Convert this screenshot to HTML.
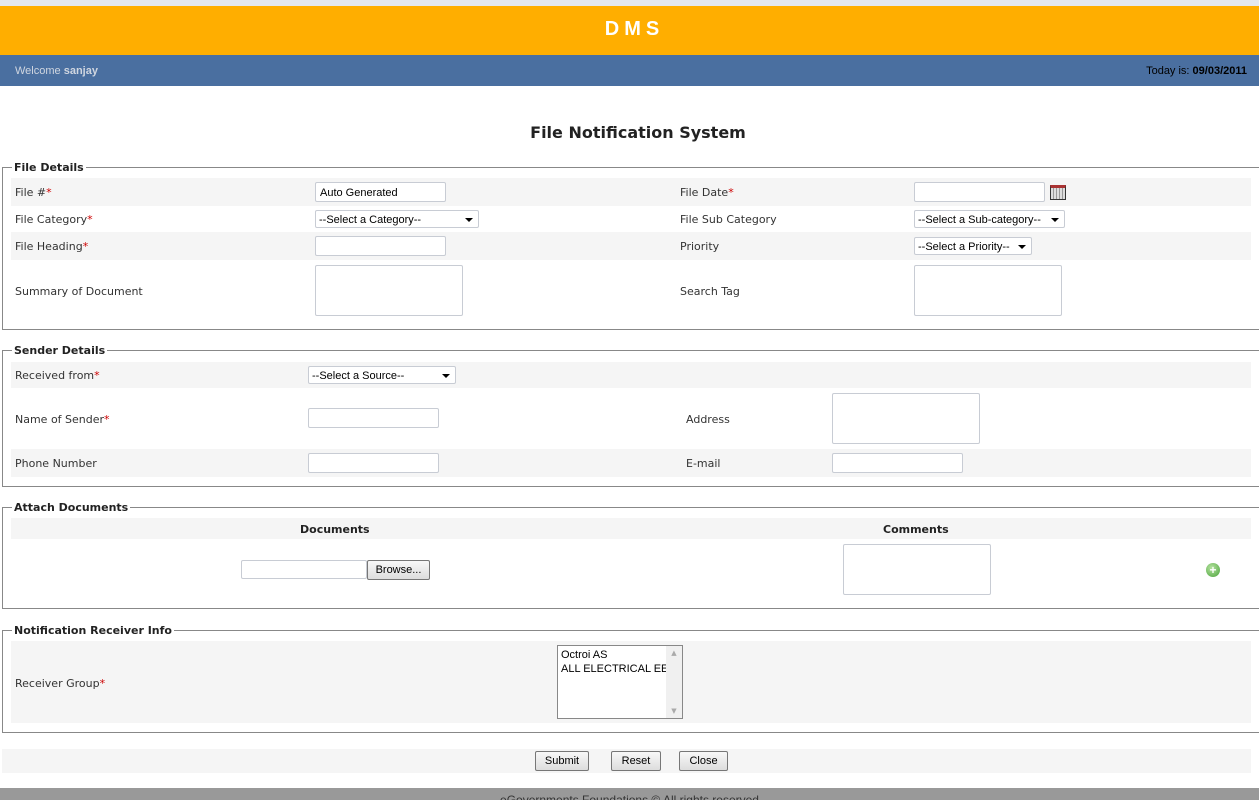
<!DOCTYPE html>
<html><head><meta charset="utf-8"><style>
*{margin:0;padding:0;box-sizing:border-box}
body{width:1259px;height:800px;position:relative;overflow:hidden;background:#fff;font-family:"DejaVu Sans",Verdana,sans-serif;font-size:11px;color:#333}
.a{position:absolute}
.g{position:absolute;background:#f5f5f5;left:11px;width:1240px}
.fs{position:absolute;left:2px;right:0;border-top:1px solid #888;border-bottom:1px solid #888;border-left:1px solid #888}
.lg{position:absolute;left:9px;top:-7px;background:#fff;padding:0 2px;font-weight:bold;font-size:11px;color:#222}
.l{position:absolute;font-size:11px;color:#333;margin-top:1px}
.r{color:#c00}
.in{position:absolute;background:#fff;border:1px solid #c8ccd4;border-radius:2px;height:20px;font-family:"Liberation Sans",Arial,sans-serif;font-size:11px;color:#000;padding:4px 4px 2px}
.ta{position:absolute;background:#fff;border:1px solid #c8ccd4;border-radius:2px}
.sel{position:absolute;background:#fff;border:1px solid #c8ccd4;border-radius:2px;height:18px;font-family:"Liberation Sans",Arial,sans-serif;font-size:11px;color:#000;padding:3px 3px 1px}
.sel:after{content:"";position:absolute;right:5px;top:7px;border-left:4px solid transparent;border-right:4px solid transparent;border-top:4px solid #000}
.btn{position:absolute;height:20px;border:1px solid #777;border-radius:2px;background:linear-gradient(#f8f8f8,#ddd);font-family:"Liberation Sans",Arial,sans-serif;font-size:11px;color:#000;text-align:center;line-height:19px}
.h{position:absolute;font-weight:bold;font-size:11px;color:#222;margin-top:1px}
</style></head><body>
<div class="a" style="left:0;top:0;width:1259px;height:6px;background:#e4e8ef"></div>
<div class="a" style="left:5px;top:6px;width:1259px;height:49px;background:#ffae00;color:#fff;font-family:'Liberation Sans',Arial,sans-serif;font-weight:bold;font-size:20px;text-align:center;line-height:46px;letter-spacing:5px">DMS</div>
<div class="a" style="left:0;top:6px;width:6px;height:49px;background:#ffae00"></div>
<div class="a" style="left:0;top:55px;width:1259px;height:31px;background:#4a6fa0"></div>
<div class="a" style="left:15px;top:65px;color:#d0d6e0;font-family:'Liberation Sans',Arial,sans-serif;font-size:11px">Welcome <b>sanjay</b></div>
<div class="a" style="right:12px;top:65px;color:#000;font-family:'Liberation Sans',Arial,sans-serif;font-size:11px">Today is: <b>09/03/2011</b></div>
<div class="a" style="left:0;width:1276px;top:123px;text-align:center;font-weight:bold;font-size:16px;color:#222">File Notification System</div>

<div class="fs" style="top:167px;height:163px"><div class="lg">File Details</div></div>
<div class="g" style="top:178px;height:28px"></div>
<div class="g" style="top:232px;height:28px"></div>
<div class="l" style="left:15px;top:185px">File #<span class="r">*</span></div>
<div class="in" style="left:315px;top:182px;width:131px">Auto Generated</div>
<div class="l" style="left:680px;top:185px">File Date<span class="r">*</span></div>
<div class="in" style="left:914px;top:182px;width:131px"></div>
<div class="a" style="left:1050px;top:185px;width:16px;height:15px;border:1px solid #333;background:repeating-linear-gradient(90deg,#ddd 0 2px,#999 2px 3px);border-top:3px solid #a33"></div>
<div class="l" style="left:15px;top:212px">File Category<span class="r">*</span></div>
<div class="sel" style="left:315px;top:210px;width:164px">--Select a Category--</div>
<div class="l" style="left:680px;top:212px">File Sub Category</div>
<div class="sel" style="left:914px;top:210px;width:151px">--Select a Sub-category--</div>
<div class="l" style="left:15px;top:239px">File Heading<span class="r">*</span></div>
<div class="in" style="left:315px;top:236px;width:131px"></div>
<div class="l" style="left:680px;top:239px">Priority</div>
<div class="sel" style="left:914px;top:237px;width:118px">--Select a Priority--</div>
<div class="l" style="left:15px;top:284px">Summary of Document</div>
<div class="ta" style="left:315px;top:265px;width:148px;height:51px"></div>
<div class="l" style="left:680px;top:284px">Search Tag</div>
<div class="ta" style="left:914px;top:265px;width:148px;height:51px"></div>

<div class="fs" style="top:350px;height:137px"><div class="lg">Sender Details</div></div>
<div class="g" style="top:362px;height:26px"></div>
<div class="g" style="top:449px;height:28px"></div>
<div class="l" style="left:15px;top:368px">Received from<span class="r">*</span></div>
<div class="sel" style="left:308px;top:366px;width:148px">--Select a Source--</div>
<div class="l" style="left:15px;top:412px">Name of Sender<span class="r">*</span></div>
<div class="in" style="left:308px;top:408px;width:131px"></div>
<div class="l" style="left:686px;top:412px">Address</div>
<div class="ta" style="left:832px;top:393px;width:148px;height:51px"></div>
<div class="l" style="left:15px;top:456px">Phone Number</div>
<div class="in" style="left:308px;top:453px;width:131px"></div>
<div class="l" style="left:686px;top:456px">E-mail</div>
<div class="in" style="left:832px;top:453px;width:131px"></div>

<div class="fs" style="top:507px;height:102px"><div class="lg">Attach Documents</div></div>
<div class="g" style="top:518px;height:21px"></div>
<div class="h" style="left:300px;top:522px">Documents</div>
<div class="h" style="left:883px;top:522px">Comments</div>
<div class="in" style="left:241px;top:560px;width:126px;height:19px"></div>
<div class="btn" style="left:367px;top:560px;width:63px">Browse...</div>
<div class="ta" style="left:843px;top:544px;width:148px;height:51px"></div>
<div class="a" style="left:1206px;top:563px;width:14px;height:14px;border-radius:50%;background:radial-gradient(circle at 40% 35%,#b5e3a0,#4aa23a);color:#fff;font:bold 12px/14px 'Liberation Sans',sans-serif;text-align:center">+</div>

<div class="fs" style="top:630px;height:103px"><div class="lg">Notification Receiver Info</div></div>
<div class="g" style="top:641px;height:82px"></div>
<div class="l" style="left:15px;top:676px">Receiver Group<span class="r">*</span></div>
<div class="a" style="left:557px;top:645px;width:126px;height:74px;background:#fff;border:1px solid #888;font-family:'Liberation Sans',Arial,sans-serif;font-size:11px;color:#000;padding:2px 3px;line-height:14px;overflow:hidden;white-space:nowrap">Octroi AS<br>ALL ELECTRICAL EE</div>
<div class="a" style="left:666px;top:646px;width:16px;height:72px;background:#f0f0f0;color:#aaa;font-size:7px;text-align:center;line-height:14px">▲<div style="position:absolute;bottom:0;width:16px">▼</div></div>

<div class="a" style="left:2px;top:749px;width:1249px;height:24px;background:#f5f5f5"></div>
<div class="btn" style="left:535px;top:751px;width:54px">Submit</div>
<div class="btn" style="left:611px;top:751px;width:50px">Reset</div>
<div class="btn" style="left:679px;top:751px;width:49px">Close</div>
<div class="a" style="left:0;top:788px;width:1259px;height:12px;background:#999;color:#333;font-family:'Liberation Sans',Arial,sans-serif;font-size:12px;text-align:center;line-height:24px;overflow:hidden">eGovernments Foundations © All rights reserved</div>
</body></html>
